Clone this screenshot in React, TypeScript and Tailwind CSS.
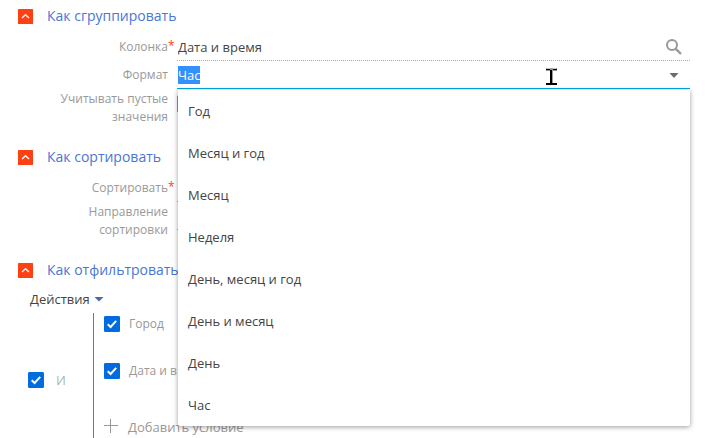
import { useEffect, useRef, useState } from 'react';
import type { ReactNode } from 'react';

const FORMATS = [
  'Год',
  'Месяц и год',
  'Месяц',
  'Неделя',
  'День, месяц и год',
  'День и месяц',
  'День',
  'Час',
];

function Section({ title, children }: { title: string; children: ReactNode }) {
  const [open, setOpen] = useState(true);

  return (
    <section>
      <h2 className="flex h-8 items-center text-sm text-[#4a76d4]">
        <button
          type="button"
          aria-expanded={open}
          onClick={() => setOpen(!open)}
          className="flex items-center gap-[14px] pl-[18px]"
        >
          <svg width="15" height="15" viewBox="0 0 15 15" className={open ? '' : 'rotate-180'}>
            <rect width="15" height="15" rx="0.5" fill="#ff4013" />
            <path d="M4 9 L7.5 5.7 L11 9" fill="none" stroke="#fff" strokeWidth="1.3" />
          </svg>
          {title}
        </button>
      </h2>
      {open && children}
    </section>
  );
}

type RowProps = {
  id: string;
  label: string;
  required?: boolean;
  tall?: boolean;
  children: ReactNode;
};

function Row({ id, label, required, tall, children }: RowProps) {
  return (
    <div className="flex pr-[22px]">
      <label
        htmlFor={id}
        className={`relative ml-10 w-32 shrink-0 text-right text-xs leading-[18px] text-[#999] ${tall ? 'py-px' : 'py-[5px]'}`}
      >
        {label}
        {required && <span className="absolute left-full top-1 text-xs leading-[18px] text-[#ff4013]">*</span>}
      </label>
      <div className="relative ml-[9px] min-w-0 flex-1">{children}</div>
    </div>
  );
}

const inputClass =
  'block h-7 w-full border-b border-dotted border-[#aaa] bg-transparent pl-px text-[#444] outline-none';

function Check({ id, label }: { id: string; label: string }) {
  return (
    <span className="relative block size-4 shrink-0">
      <input
        id={id}
        type="checkbox"
        defaultChecked
        aria-label={label}
        className="peer block size-4 appearance-none rounded-[1px] border border-[#006ce0] checked:bg-[#006ce0]"
      />
      <svg
        viewBox="0 0 16 16"
        className="pointer-events-none absolute inset-0 hidden size-4 peer-checked:block"
      >
        <path d="M3.7 8.2 L6.6 11 L12.2 4.9" fill="none" stroke="#fff" strokeWidth="2" />
      </svg>
    </span>
  );
}

function FormatField() {
  const [value, setValue] = useState('Час');
  const [open, setOpen] = useState(true);
  const ref = useRef<HTMLInputElement>(null);

  useEffect(() => {
    ref.current?.focus();
    ref.current?.select();
  }, []);

  return (
    <>
      <input
        ref={ref}
        id="format"
        role="combobox"
        aria-expanded={open}
        aria-controls="format-list"
        value={value}
        onChange={(e) => setValue(e.target.value)}
        className="block h-7 w-full border-b border-[#00a8e8] bg-transparent pl-px text-[#444] outline-none selection:bg-[#3390ff] selection:text-white"
      />
      <button
        type="button"
        aria-label="Открыть список"
        onClick={() => setOpen(!open)}
        className="absolute right-1.5 top-1 flex size-5 items-center justify-center"
      >
        <svg width="16" height="16" viewBox="0 0 16 16">
          <path d="M3.5 6 H12.5 L8 11 Z" fill="#6b6b6b" />
        </svg>
      </button>
      {/* text cursor */}
      <svg
        width="11"
        height="18"
        viewBox="0 0 11 18"
        shapeRendering="crispEdges"
        className="pointer-events-none absolute right-[133px] top-[7px]"
      >
        <path d="M0 0H11V3H0Z" fill="#999" />
        <path d="M5 2H7V16H5Z" fill="#999" />
        <path d="M0 1H4V2H0ZM7 1H11V2H7ZM4 2H6V15H4ZM0 15H11V17H0Z" fill="#000" />
        <path d="M1 0H4V1H1ZM7 0H10V1H7Z" fill="#ccc" />
      </svg>
      {open && (
        <ul
          id="format-list"
          role="listbox"
          className="absolute left-px right-0 top-full z-10 mt-px rounded-b-xs bg-white shadow-[0_1px_5px_rgba(0,0,0,0.4)]"
        >
          {FORMATS.map((item) => (
            <li key={item} role="option" aria-selected={item === value}>
              <button
                type="button"
                onClick={() => {
                  setValue(item);
                  setOpen(false);
                }}
                className="block h-[42px] w-full px-[10px] text-left text-[#444] hover:bg-[#f5f5f5]"
              >
                {item}
              </button>
            </li>
          ))}
        </ul>
      )}
    </>
  );
}

export default function App() {
  return (
    <main className="bg-white font-['Open_Sans','Noto_Sans',sans-serif] text-[13px] leading-[18px] text-[#444]">
      <div className="flex flex-col gap-[14px]">
        <Section title="Как сгруппировать">
          <div className="pt-px">
            <Row id="column" label="Колонка" required>
              <input id="column" defaultValue="Дата и время" className={inputClass} />
              <button
                type="button"
                aria-label="Найти"
                className="absolute right-1.5 top-1 flex size-5 items-center justify-center"
              >
                <svg width="18" height="18" viewBox="0 0 18 18" fill="none" stroke="#999">
                  <circle cx="7" cy="7" r="5" strokeWidth="2" />
                  <path d="M10.8 10.8 L16 16" strokeWidth="2.4" />
                </svg>
              </button>
            </Row>
            <Row id="format" label="Формат">
              <FormatField />
            </Row>
            <Row id="empty" label="Учитывать пустые значения" tall>
              <input
                id="empty"
                type="checkbox"
                className="mt-[7px] block size-4 appearance-none border border-[#999] checked:bg-[#006ce0]"
              />
            </Row>
          </div>
        </Section>

        <Section title="Как сортировать">
          <div className="pt-px">
            <Row id="sort" label="Сортировать" required>
              <input id="sort" className={inputClass} />
            </Row>
            <Row id="direction" label="Направление сортировки" tall>
              <input id="direction" className={inputClass} />
            </Row>
          </div>
        </Section>

        <Section title="Как отфильтровать">
          <button type="button" className="flex h-[26px] items-center gap-1 pl-[30px]">
            Действия
            <svg width="10" height="10" viewBox="0 0 10 10">
              <path d="M0.5 3 H9.5 L5 7.5 Z" fill="#4a6ba8" />
            </svg>
          </button>
          <div className="mt-px flex">
            <div className="mt-[59px] flex h-4 w-[93px] items-center gap-3 self-start pl-7">
              <Check id="all" label="Все условия" />
              <button type="button" className="text-[#a8b8b0]">
                И
              </button>
            </div>
            <div className="flex-1 border-l border-[#0d9ddb] pl-[10px] text-[#999]">
              <div className="flex h-[22px] items-center gap-[9px] text-xs">
                <Check id="city" label="Город" />
                <label htmlFor="city">Город</label>
              </div>
              <div className="mt-[25px] flex h-[22px] items-center gap-[9px] text-xs">
                <Check id="date" label="Дата и в" />
                <label htmlFor="date">Дата и в</label>
              </div>
              <button type="button" className="mt-[34px] flex h-[22px] items-center gap-2">
                <svg width="16" height="16" viewBox="0 0 16 16" shapeRendering="crispEdges">
                  <path d="M0 6.5 H14 M6.5 0 V14" stroke="#999" />
                </svg>
                Добавить условие
              </button>
            </div>
          </div>
        </Section>
      </div>
    </main>
  );
}
